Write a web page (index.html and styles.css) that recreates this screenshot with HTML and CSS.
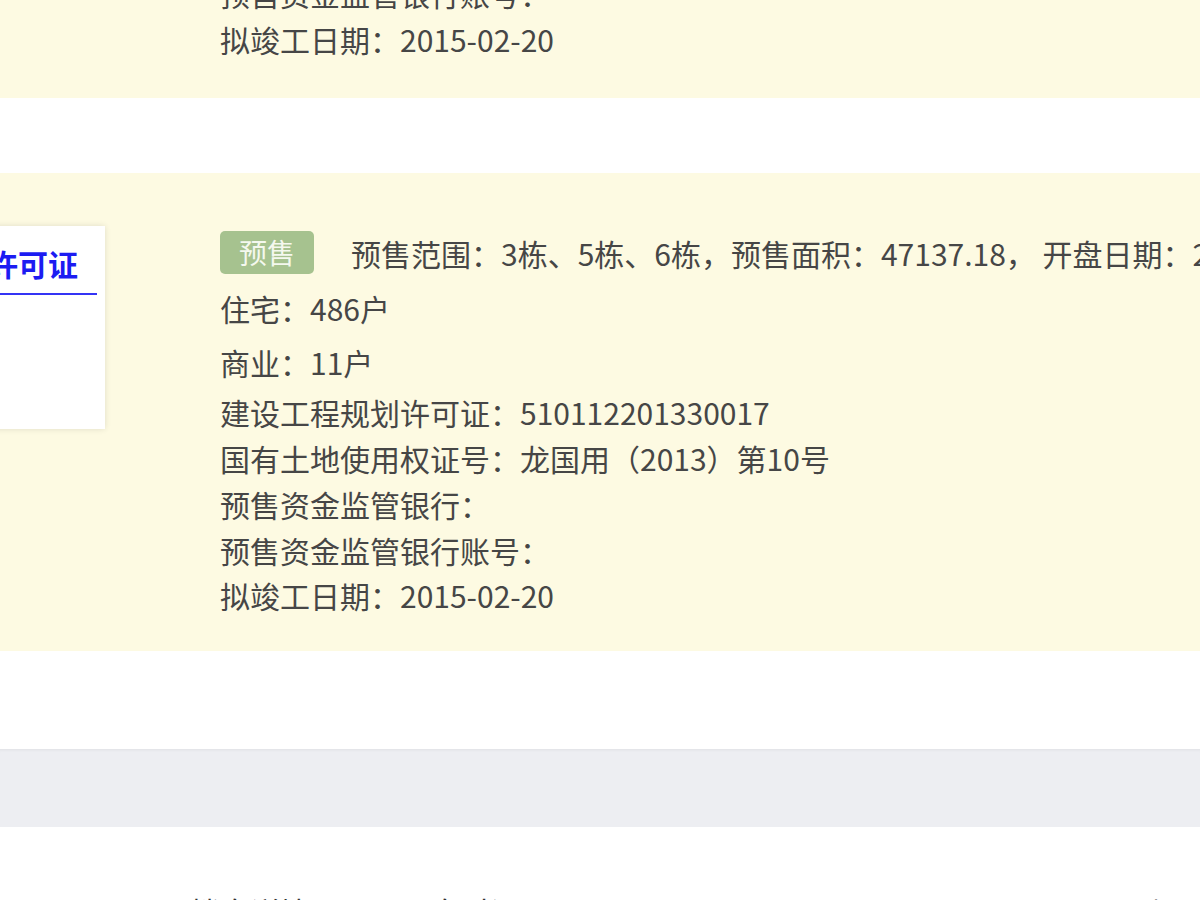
FILE: index.html
```html
<!DOCTYPE html>
<html lang="zh-CN">
<head>
    <meta charset="UTF-8">
    <meta name="viewport" content="width=device-width, initial-scale=1.0">
    <title>预售许可证</title>
    <link rel="stylesheet" href="styles.css">
</head>
<body>
    <div class="page">
        <div class="card card-partial">
            <div class="info">
                <div class="details">
                    <p>预售资金监管银行账号：</p>
                    <p>拟竣工日期：2015-02-20</p>
                </div>
            </div>
        </div>

        <div class="card card-last">
            <div class="tab-box">
                <div class="tab-title">预售许可证</div>
            </div>
            <div class="info">
                <div class="status-row">
                    <span class="badge">预售</span>
                    <span class="summary">预售范围：3栋、5栋、6栋，预售面积：47137.18， 开盘日期：2014-12-28</span>
                </div>
                <p class="unit">住宅：486户</p>
                <p class="unit unit-second">商业：11户</p>
                <div class="details">
                    <p>建设工程规划许可证：510112201330017</p>
                    <p>国有土地使用权证号：龙国用（2013）第10号</p>
                    <p>预售资金监管银行：</p>
                    <p>预售资金监管银行账号：</p>
                    <p>拟竣工日期：2015-02-20</p>
                </div>
            </div>
        </div>

        <div class="divider"></div>

        <div class="footer">
            <span class="footer-item first">楼盘详情</span>
            <span class="footer-item second">开盘时间</span>
            <span class="footer-item last">|</span>
        </div>
    </div>
</body>
</html>
```

FILE: styles.css
```css
body {
    margin: 0;
    overflow: hidden;
    background-color: #ffffff;
    font-family: "Noto Sans CJK SC", "Microsoft YaHei", sans-serif;
    font-size: 30px;
    color: #464646;
}
p {
    margin: 0;
}
.page {
    margin-top: -34px;
}
.card {
    display: flex;
    align-items: flex-start;
    background-color: #fdfae2;
    padding: 53px 0 33px 0;
    margin-bottom: 75px;
}
.card-partial {
    padding: 0 0 36px 220px;
}
.card-partial .info {
    margin: 0;
}
.card-last {
    margin-bottom: 98px;
}
.tab-box {
    flex-shrink: 0;
    margin-left: -99px;
    width: 204px;
    height: 203px;
    box-sizing: border-box;
    padding: 7px 8px;
    background-color: #ffffff;
    box-shadow: 0 0 6px rgba(0, 0, 0, 0.12);
}
.tab-title {
    height: 60px;
    line-height: 60px;
    text-align: center;
    font-weight: bold;
    color: #1c1cf2;
    border-bottom: 2px solid #3434f5;
}
.info {
    margin: 4px 0 0 115px;
    white-space: nowrap;
}
.status-row {
    display: flex;
    align-items: center;
    height: 45px;
}
.badge {
    height: 43px;
    line-height: 43px;
    padding: 0 19px;
    border-radius: 5px;
    background-color: #a6c28f;
    color: #f4f8ee;
    font-size: 28px;
}
.summary {
    margin-left: 37px;
}
.unit {
    line-height: 45px;
    margin-top: 11px;
}
.unit-second {
    margin-top: 9px;
}
.details {
    margin-top: 4px;
    line-height: 46px;
}
.card-last .details p:last-child {
    line-height: 45px;
}
.divider {
    height: 78px;
    background-color: #edeef2;
    box-shadow: inset 0 3px 3px -2px rgba(0, 0, 0, 0.06);
}
.footer {
    display: flex;
    margin-top: 62px;
    padding-left: 190px;
    line-height: 45px;
    color: #333;
}
.footer-item.second {
    margin-left: 90px;
}
.footer-item.last {
    margin-left: 632px;
    color: #999;
}
```
